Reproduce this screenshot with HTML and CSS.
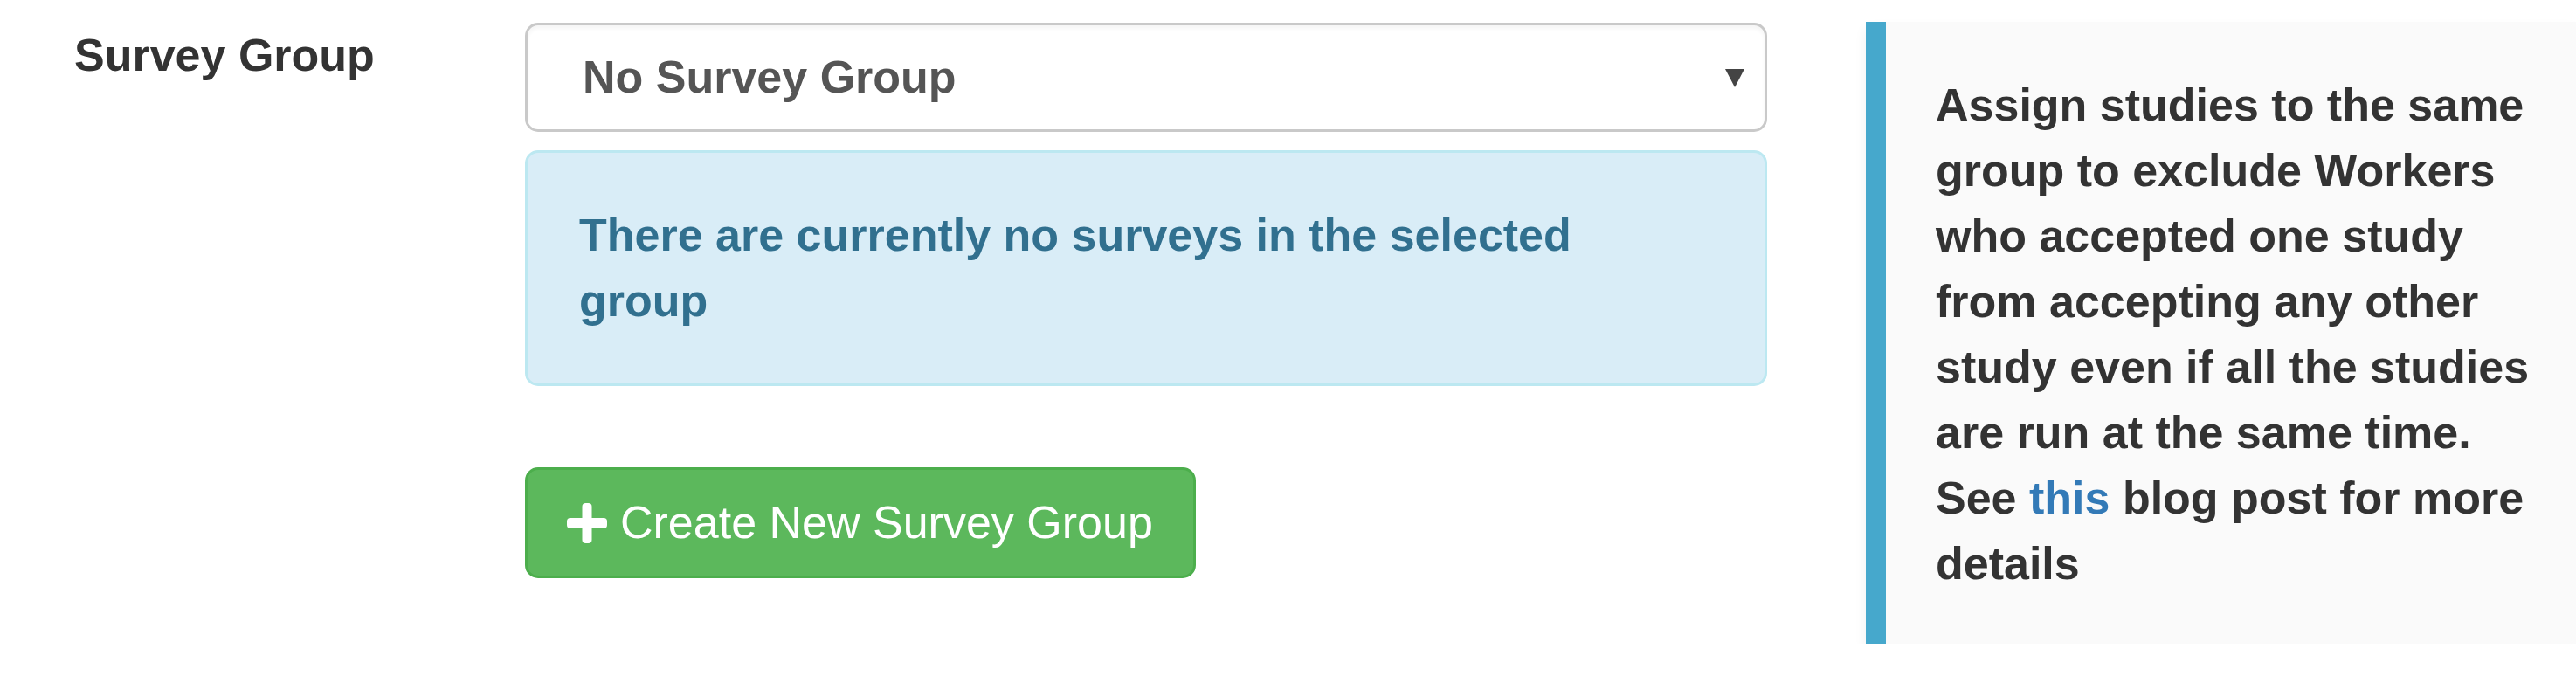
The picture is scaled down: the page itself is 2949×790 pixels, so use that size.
FILE: index.html
```html
<!DOCTYPE html>
<html lang="en">
<head>
<meta charset="utf-8">
<title>Survey Group</title>
<link rel="stylesheet" href="styles.css">
</head>
<body>
<div class="page">
  <div class="label-col">
    <label class="control-label">Survey Group</label>
  </div>
  <div class="form-col">
    <div class="select-box">
      <span class="select-text">No Survey Group</span>
      <svg class="caret" width="22" height="21" viewBox="0 0 22 21"><polygon points="0,0 22,0 11,21" fill="#444"/></svg>
    </div>
    <div class="alert-info">There are currently no surveys in the selected group</div>
    <div class="btn-row">
      <button class="btn-success" type="button">
        <svg class="plus" width="46" height="46" viewBox="0 0 46 46"><rect x="17.5" y="0" width="11" height="46" rx="4" fill="#fff"/><rect x="0" y="17" width="46" height="12" rx="4" fill="#fff"/></svg>
        <span>Create New Survey Group</span>
      </button>
    </div>
  </div>
  <div class="callout">
    Assign studies to the same group to exclude Workers who accepted one study from accepting any other study even if all the studies are run at the same time. See <a href="#" class="link">this</a> blog post for more details
  </div>
</div>
</body>
</html>
```
FILE: styles.css
```css
html, body {
  margin: 0;
  padding: 0;
  background: #fff;
  overflow: hidden;
}
body {
  font-family: "Liberation Sans", Arial, sans-serif;
  font-size: 52px;
  line-height: 75px;
  color: #333;
}
.page {
  display: flex;
  align-items: flex-start;
  padding-top: 25px;
  width: 2949px;
}
.label-col {
  width: 601px;
  padding-left: 85px;
  box-sizing: border-box;
  flex: none;
}
.control-label {
  display: block;
  font-weight: bold;
  color: #333;
  padding-top: 1px;
}
.form-col {
  width: 1422px;
  flex: none;
  margin-top: 1px;
}
.select-box {
  height: 125px;
  box-sizing: border-box;
  border: 3px solid #c9c9c9;
  border-radius: 15px;
  background: #fff;
  box-shadow: inset 0 4px 4px rgba(0,0,0,0.04);
  display: flex;
  align-items: center;
  justify-content: space-between;
  padding: 0 23px 0 63px;
}
.select-text {
  font-weight: bold;
  color: #555;
}
.caret {
  display: block;
  margin-top: 2px;
}
.alert-info {
  margin-top: 21px;
  border: 3px solid #bce8f1;
  border-radius: 15px;
  background: #d9edf7;
  color: #31708f;
  font-weight: bold;
  padding: 57px 90px 57px 59px;
}
.btn-row {
  margin-top: 93px;
}
.btn-success {
  display: inline-flex;
  align-items: center;
  gap: 15px;
  font-family: "Liberation Sans", Arial, sans-serif;
  font-size: 52px;
  line-height: 75px;
  font-weight: normal;
  color: #fff;
  background: #5cb85c;
  border: 3px solid #4cae4c;
  border-radius: 15px;
  padding: 23px 46px 23px 45px;
  margin: 0;
  cursor: pointer;
}
.plus {
  display: block;
  flex: none;
}
.callout {
  margin-left: 113px;
  flex: 1;
  box-sizing: border-box;
  border-left: 23px solid #46a8cc;
  background: #fafafa;
  padding: 58px 34px 54px 57px;
  font-weight: bold;
  color: #333;
  box-shadow: 0 8px 14px rgba(0,0,0,0.06);
}
.link {
  color: #337ab7;
  text-decoration: none;
}
```
